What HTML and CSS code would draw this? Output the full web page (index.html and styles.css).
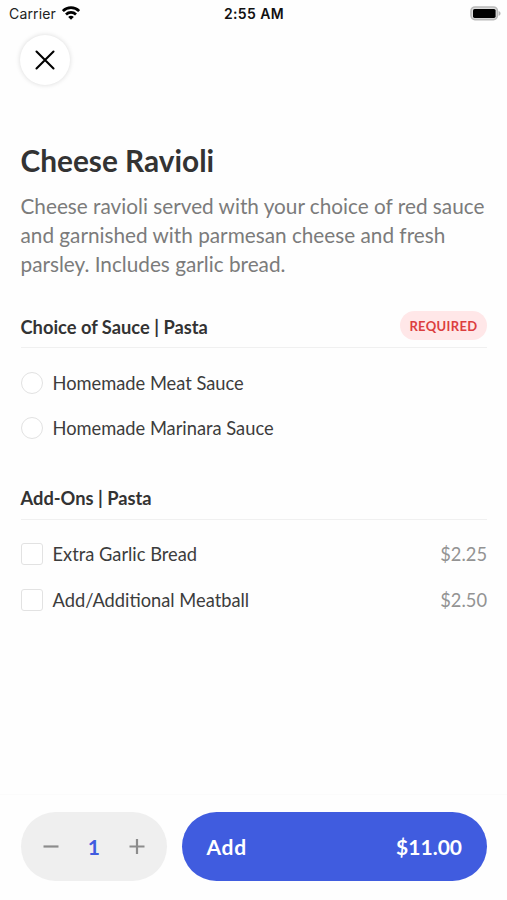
FILE: index.html
```html
<!DOCTYPE html>
<html lang="en">
<head>
<meta charset="utf-8">
<title>Cheese Ravioli</title>
<link rel="stylesheet" href="styles.css">
</head>
<body>
<div class="screen">
  <header class="status">
    <div class="carrier"><span class="carrier-name">Carrier</span>
      <svg class="wifi" width="18" height="14" viewBox="0 0 18 14"><g fill="none" stroke="#000" stroke-width="2.7"><path d="M.9 5.1a11.4 11.4 0 0 1 16.2 0"/><path d="M4 8.5a7.1 7.1 0 0 1 10 0"/></g><path d="M9 13.8 6.2 11a3.9 3.9 0 0 1 5.6 0z"/></svg>
    </div>
    <span class="time">2:55 AM</span>
    <svg class="battery" width="31" height="15" viewBox="0 0 31 15"><rect x="1" y="1" width="26.4" height="12.6" rx="4" fill="#ddd" stroke="#b9b9b9" stroke-width="1.6"/><rect x="3" y="2.9" width="22.6" height="9" rx="1.6"/><path d="M28.6 5c2.6 1 2.6 3.8 0 4.8z" fill="#b4b4b4"/></svg>
  </header>
  <button class="close" aria-label="Close"><svg width="20" height="20" viewBox="0 0 20 20"><path d="M1.5 1.5l17 17M18.5 1.5l-17 17" stroke="#000" stroke-width="2.1" stroke-linecap="round"/></svg></button>
  <main>
    <h1>Cheese Ravioli</h1>
    <p class="desc">Cheese ravioli served with your choice of red sauce and garnished with parmesan cheese and fresh parsley. Includes garlic bread.</p>
    <section class="group">
      <div class="head"><h2>Choice of Sauce | Pasta</h2><span class="badge">REQUIRED</span></div>
      <div class="option"><span class="mark radio"></span><span>Homemade Meat Sauce</span></div>
      <div class="option"><span class="mark radio"></span><span>Homemade Marinara Sauce</span></div>
    </section>
    <section class="group">
      <div class="head"><h2>Add-Ons | Pasta</h2></div>
      <div class="option"><span class="mark"></span><span>Extra Garlic Bread</span><span class="price">$2.25</span></div>
      <div class="option"><span class="mark"></span><span>Add/Additional Meatball</span><span class="price">$2.50</span></div>
    </section>
  </main>
  <footer>
    <div class="stepper">
      <svg width="16" height="16" viewBox="0 0 16 16"><path d="M.5 7.5h15" stroke="#8c8c8c" stroke-width="2.2"/></svg>
      <span class="qty">1</span>
      <svg width="16" height="16" viewBox="0 0 16 16"><path d="M.5 7.5h15M8 0v15" stroke="#8c8c8c" stroke-width="2.2"/></svg>
    </div>
    <button class="add"><span class="add-label">Add</span><span class="total">$11.00</span></button>
  </footer>
</div>
</body>
</html>
```
FILE: styles.css
```css
* { box-sizing: border-box; }
body { margin: 0; background: #fefefe; font-family: Lato, sans-serif; color: #333; }
button { border: 0; padding: 0; font-family: inherit; }
h1, h2, p { margin: 0; }
.screen { height: 900px; display: flex; flex-direction: column; overflow: hidden; }
.status { height: 28px; padding: 0 6px 2px 9px; display: grid; grid-template-columns: 1fr auto 1fr; align-items: center; font-family: Inter, sans-serif; font-size: 14px; }
.carrier { display: flex; align-items: center; gap: 6px; color: #222; letter-spacing: .15px; }
.time { font-weight: 600; color: #111; letter-spacing: .4px; margin-right: 2px; }
.battery { justify-self: end; }
.close { width: 50px; height: 50px; margin: 7px 0 0 20px; border-radius: 50%; background: #fff; display: flex; align-items: center; justify-content: center; box-shadow: 0 0 5px rgba(0, 0, 0, .15); }
main { flex: 1; padding: 58px 20px 0 20.5px; }
h1 { font-size: 29.8px; line-height: 36px; font-weight: 700; white-space: nowrap; }
.desc { margin: 12.5px -2px 0 0; font-size: 20.75px; line-height: 29.4px; color: #7b7b7b; }
.group { margin-top: 25.3px; }
.group + .group { margin-top: 26.5px; }
.head { height: 43px; display: flex; align-items: center; justify-content: space-between; border-bottom: 1px solid #f0f0f0; margin-bottom: 12px; }
h2 { padding-top: 1px; font-size: 18.3px; line-height: 24px; font-weight: 700; }
.badge { height: 29px; width: 87px; margin-bottom: 2px; border-radius: 15px; background: #ffe7e8; color: #dc3f3f; font-size: 13px; letter-spacing: .35px; font-weight: 700; line-height: 30px; text-align: center; }
.option { height: 45.2px; display: flex; align-items: center; font-size: 18.3px; color: #3c3c3c; }
.mark { width: 22px; height: 22px; margin-right: 10px; border: 1.5px solid #e2e2e2; border-radius: 3px; background: #fff; }
.radio { border-radius: 50%; }
.price { margin-left: auto; color: #939393; }
footer { height: 106px; padding: 17px 20px 20px 20.5px; display: flex; gap: 15px; border-top: 1px solid #fbfbfb; }
.stepper { width: 146.5px; height: 69px; border-radius: 34.5px; background: #efefef; display: flex; align-items: center; justify-content: space-between; padding: 0 22px; }
.qty { font-size: 21px; font-weight: 700; color: #405cdf; }
.add { flex: 1; height: 69px; border-radius: 34.5px; background: #405cdf; color: #fff; display: flex; align-items: center; justify-content: space-between; padding: 0 25px 1px 24.5px; font-size: 21px; font-weight: 700; }
.add-label { letter-spacing: .7px; }
```
